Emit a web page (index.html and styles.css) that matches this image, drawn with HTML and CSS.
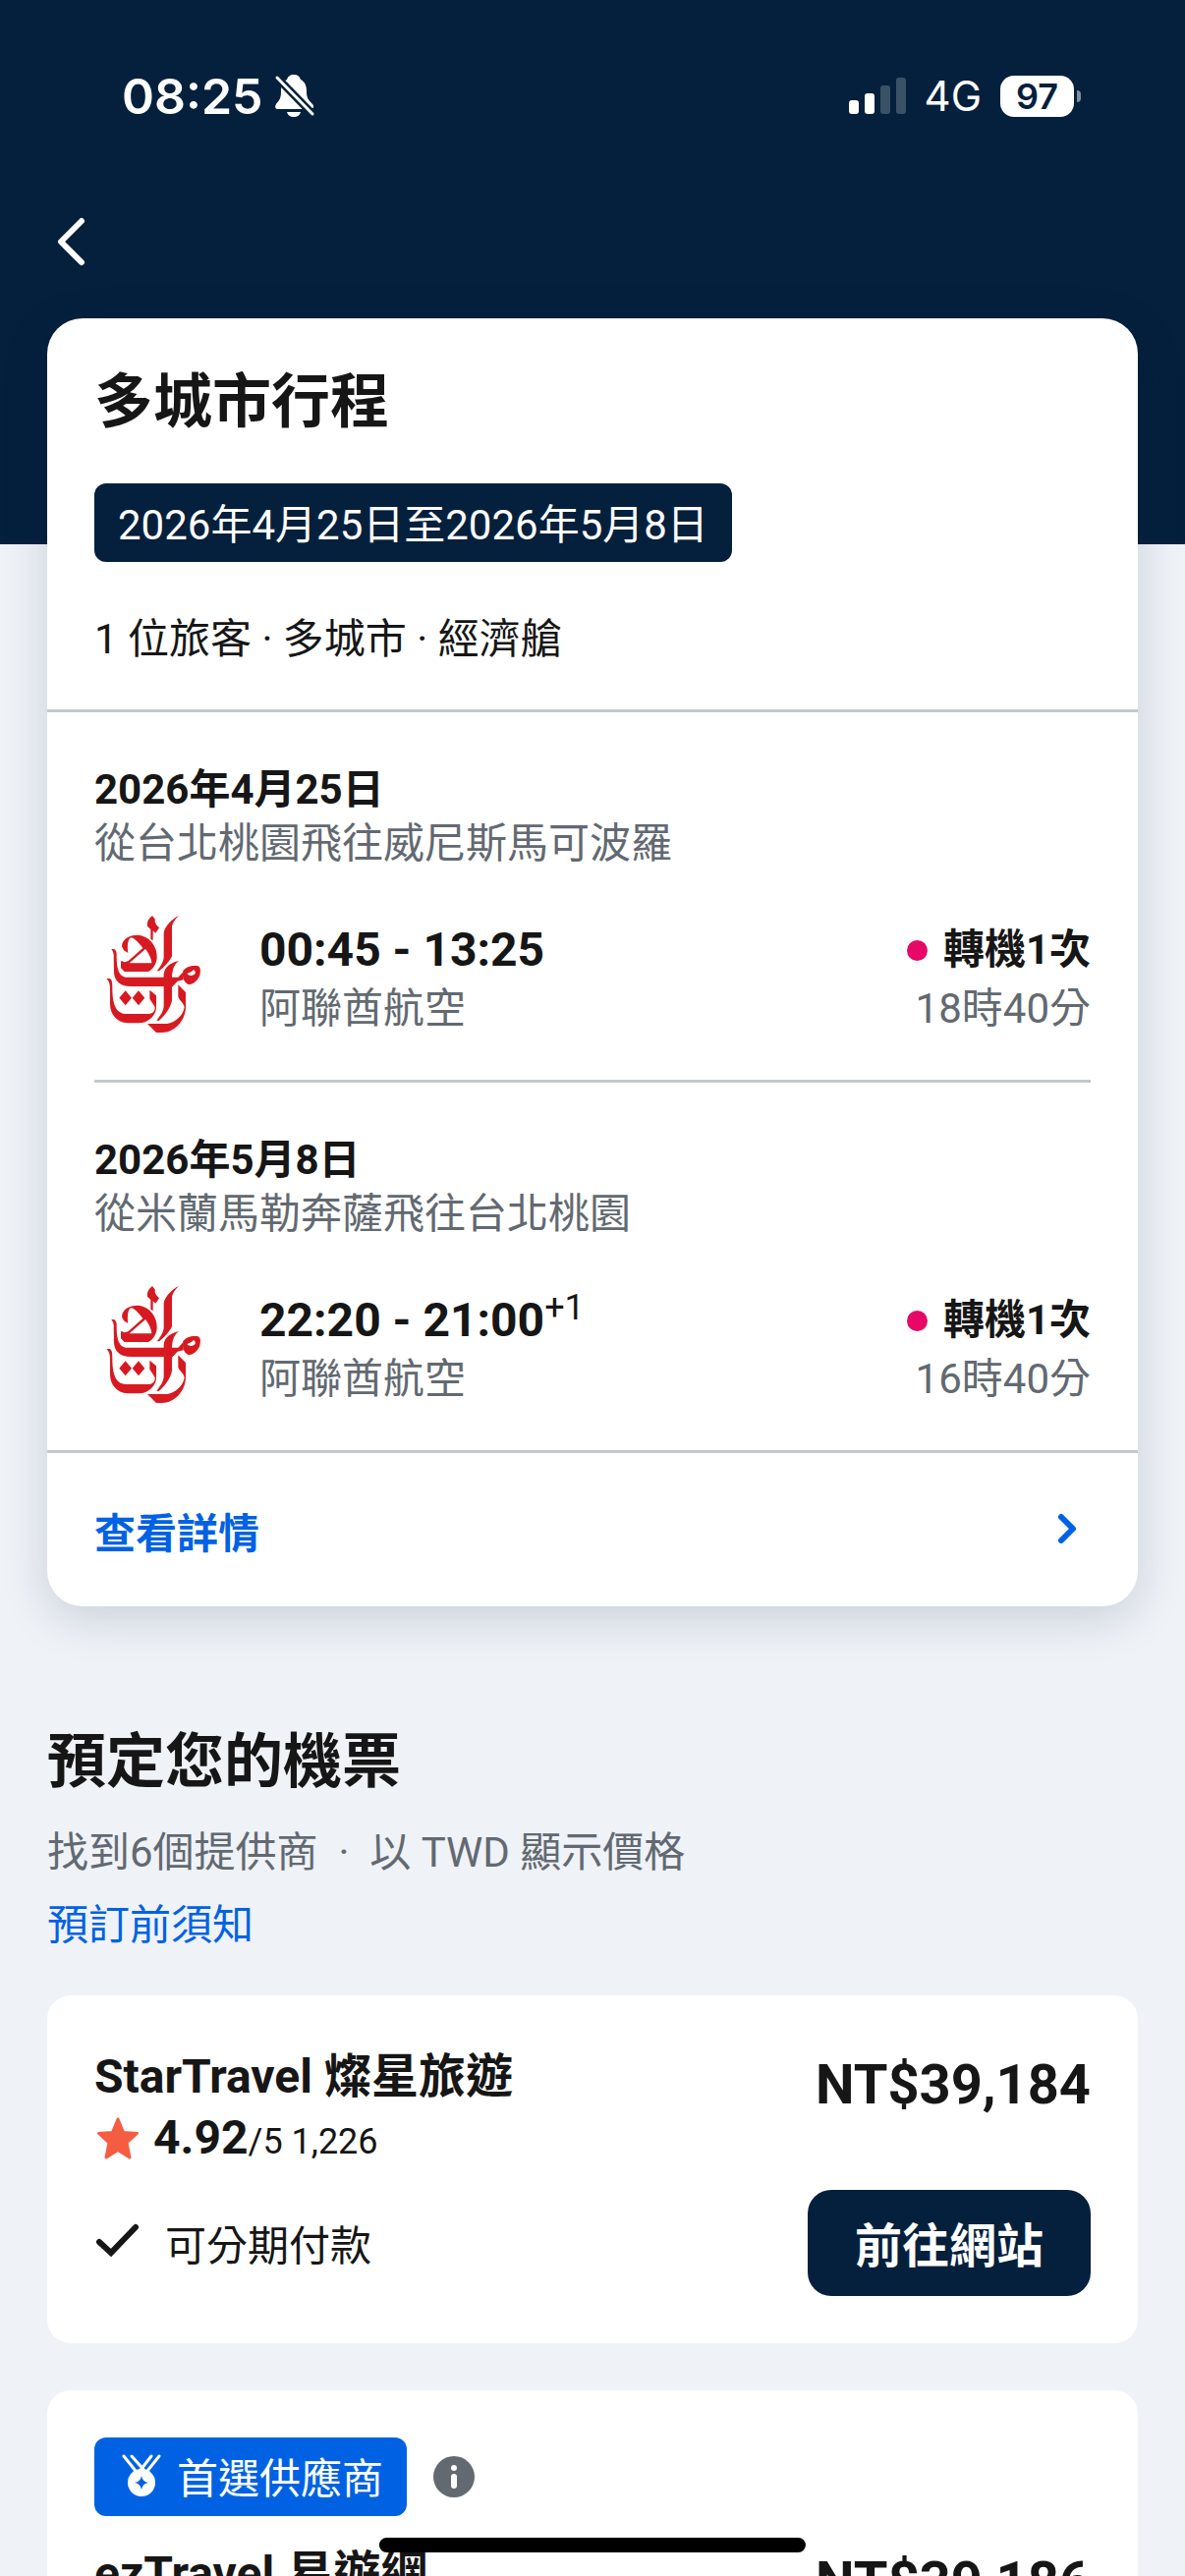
FILE: index.html
```html
<!DOCTYPE html>
<html lang="zh-Hant">
<head>
    <meta charset="UTF-8">
    <meta name="viewport" content="width=device-width, initial-scale=1.0">
    <title>多城市行程</title>
    <link rel="stylesheet" href="styles.css">
</head>
<body>
    <svg class="sprite" aria-hidden="true">
        <symbol id="emirates" viewBox="18 66 360 375">
            <g fill="#d71a21" fill-rule="evenodd">
                <path d="M195 66C184 75 178 84 180 98L190 108V137L197 142V112L205 119L216 103C208 95 200 85 204 78Z"/>
                <path d="M276 66C255 75 233 100 230 118V195C228 208 218 225 209 235L216 235C230 225 248 205 255 190V100C256 90 266 75 276 66Z"/>
                <path d="M102 160C102 138 125 125 150 125C185 127 212 160 209 195C207 215 197 230 183 237H110L99 226V205H104C108 209 115 208 122 204L166 165C155 150 140 134 130 133C120 137 118 160 121 180L108 172ZM125 211L174 168C182 178 192 195 193 211Z"/>
                <path d="M70 168H78Q87 172 86 188C86 225 92 254 118 254H230C228 232 240 212 276 204C262 215 256 230 255 254H274L290 237V262L272 266L255 284V325C252 345 235 370 215 387L208 386C220 370 230 358 230 340V282H130C95 282 80 265 78 240L77 185Q76 175 70 168Z"/>
                <path d="M289 234C298 222 318 216 335 220C343 225 343 235 340 248C334 265 318 276 305 276C292 270 286 255 289 234ZM301 243C306 250 318 251 325 244C328 240 326 234 321 231C315 239 309 240 301 243Z"/>
                <path d="M55 258H65C72 262 73 270 73 285C73 330 80 365 115 366H185C198 365 204 355 203 345L187 320V293L207 310V350C203 375 180 393 155 394H120C85 392 66 365 66 335V285C65 272 62 264 55 258Z"/>
                <path d="M113 295L132 317L113 340L94 317ZM153 295L172 317L153 340L134 317Z"/>
                <path d="M274 277L297 300V345C296 390 260 423 225 423H207L180 396H240C266 392 290 370 293 345C290 330 276 325 274 313Z"/>
            </g>
        </symbol>
    </svg>

    <div class="screen">
        <header class="header">
            <div class="status-bar">
                <div class="status-left">
                    <span class="clock">08:25</span>
                    <svg width="40" height="44" viewBox="0 0 40 44" aria-hidden="true">
                        <path fill="#fff" d="M19 0C15 0 13 2 12 5C7 7 6 12 6 17C6 25 4 26 1 30C-1 34 1 35 3 35H36C39 35 40 32 38 30C34 26 32 24 32 17C32 11 30 7 26 5C25 2 23 0 19 0ZM12 38H26C25 42 22 43 19 43S13 42 12 38Z"/>
                        <path stroke="#05203c" stroke-width="8" d="M0 1L40 42"/>
                        <path stroke="#fff" stroke-width="3" stroke-linecap="round" d="M2 3L38 40"/>
                    </svg>
                </div>
                <div class="status-right">
                    <svg width="58" height="38" viewBox="0 0 58 38" fill="#fff" aria-hidden="true">
                        <rect x="0" y="23" width="10" height="14" rx="3"/>
                        <rect x="16" y="16" width="10" height="21" rx="3"/>
                        <rect x="32" y="8" width="10" height="29" rx="3" opacity=".22"/>
                        <rect x="48" y="0" width="10" height="37" rx="3" opacity=".22"/>
                    </svg>
                    <span class="network">4G</span>
                    <span class="battery">97</span>
                </div>
            </div>
            <button class="back" aria-label="返回">
                <svg width="30" height="50" viewBox="0 0 30 50" fill="none" stroke="#fff" stroke-width="6" stroke-linecap="round" stroke-linejoin="round"><path d="M27 5L6 26L27 47"/></svg>
            </button>
        </header>

        <main class="content">
            <section class="trip">
                <div class="trip-summary">
                    <h1 class="title">多城市行程</h1>
                    <p class="badge dates">2026年4月25日至2026年5月8日</p>
                    <p class="passengers">1 位旅客 · 多城市 · 經濟艙</p>
                </div>
                <div class="legs">
                    <article class="leg">
                        <h2 class="leg-date">2026年4月25日</h2>
                        <p class="muted">從台北桃園飛往威尼斯馬可波羅</p>
                        <div class="flight">
                            <svg class="airline-logo" role="img" aria-label="阿聯酋航空"><use href="#emirates"/></svg>
                            <div class="flight-main">
                                <p class="times">00:45 - 13:25</p>
                                <p class="muted">阿聯酋航空</p>
                            </div>
                            <div class="flight-side">
                                <p class="stops">轉機1次</p>
                                <p class="muted">18時40分</p>
                            </div>
                        </div>
                    </article>
                    <article class="leg">
                        <h2 class="leg-date">2026年5月8日</h2>
                        <p class="muted">從米蘭馬勒奔薩飛往台北桃園</p>
                        <div class="flight">
                            <svg class="airline-logo" role="img" aria-label="阿聯酋航空"><use href="#emirates"/></svg>
                            <div class="flight-main">
                                <p class="times">22:20 - 21:00<sup>+1</sup></p>
                                <p class="muted">阿聯酋航空</p>
                            </div>
                            <div class="flight-side">
                                <p class="stops">轉機1次</p>
                                <p class="muted">16時40分</p>
                            </div>
                        </div>
                    </article>
                </div>
                <a class="details" href="#">
                    <span>查看詳情</span>
                    <svg width="48" height="42" viewBox="0 0 48 42" fill="none" stroke="#0062e3" stroke-width="6" stroke-linecap="round" stroke-linejoin="round" aria-hidden="true"><path d="M18 9L30 21L18 33"/></svg>
                </a>
            </section>

            <section class="booking">
                <h2 class="title">預定您的機票</h2>
                <p class="providers muted">找到6個提供商 &nbsp;·&nbsp; 以 TWD 顯示價格</p>
                <a class="notice" href="#">預訂前須知</a>

                <div class="offers">
                    <article class="offer">
                        <div class="offer-top">
                            <div>
                                <h3 class="vendor">StarTravel 燦星旅遊</h3>
                                <p class="rating">
                                    <svg width="48" height="48" viewBox="0 2 48 48" aria-hidden="true"><path fill="#f55d42" stroke="#f55d42" stroke-width="3" stroke-linejoin="round" d="M24 3L29.500 16.500L43.500 17.500L33 27L36 42L24 34.500L12 42L15 27L4.500 17.500L18.500 16.500Z"/></svg>
                                    <span><strong>4.92</strong>/5 1,226</span>
                                </p>
                            </div>
                            <p class="price">NT$39,184</p>
                        </div>
                        <div class="offer-bottom">
                            <p class="perk">
                                <svg width="48" height="42" viewBox="0 0 48 42" fill="none" stroke="#161616" stroke-width="6" stroke-linecap="round" stroke-linejoin="miter" aria-hidden="true"><path d="M5 22L17 33L42 7"/></svg>
                                可分期付款
                            </p>
                            <button class="go">前往網站</button>
                        </div>
                    </article>

                    <article class="offer">
                        <div class="offer-tags">
                            <span class="badge preferred">
                                <svg width="48" height="42" viewBox="0 0 48 42" aria-hidden="true">
                                    <g fill="none" stroke="#fff" stroke-width="3" stroke-linecap="round"><path d="M6 0L18 15M14 0L30 18M42 0L30 15M34 0L20 18"/></g>
                                    <circle cx="24" cy="27" r="14" fill="#fff"/>
                                    <path fill="#0062e3" d="M24 20Q25 26 31 27Q25 28 24 34Q23 28 17 27Q23 26 24 20Z"/>
                                </svg>
                                首選供應商
                            </span>
                            <button class="info" aria-label="首選供應商說明">
                                <svg width="42" height="42" viewBox="0 0 42 42"><circle cx="21" cy="21" r="21" fill="#626971"/><circle cx="21" cy="12" r="3" fill="#fff"/><path stroke="#fff" stroke-width="6" stroke-linecap="round" d="M21 21V30"/></svg>
                            </button>
                        </div>
                        <div class="offer-top">
                            <h3 class="vendor">ezTravel 易遊網</h3>
                            <p class="price">NT$39,186</p>
                        </div>
                    </article>
                </div>
            </section>
        </main>
    </div>
    <div class="home-indicator"></div>
</body>
</html>
```
FILE: styles.css
```css
* {
    box-sizing: border-box;
}
body, h1, h2, h3, p {
    margin: 0;
}
body {
    background: #eff2f7;
    color: #161616;
    font-family: Roboto, "Noto Sans CJK TC", sans-serif;
    font-size: 42px;
    line-height: 54px;
}
button {
    border: none;
    padding: 0;
    background: none;
    font-family: inherit;
    cursor: pointer;
}
a {
    color: #0062e3;
    text-decoration: none;
}
svg {
    display: block;
    flex: none;
    overflow: visible;
}
.sprite {
    position: absolute;
    width: 0;
    height: 0;
}
.screen {
    height: 100vh;
    overflow: hidden;
}

/* header */
.header {
    background: #05203c;
    padding-bottom: 284px;
}
.status-bar {
    display: flex;
    justify-content: space-between;
    align-items: center;
    padding: 66px 113px 0 124px;
    color: white;
    font-family: Inter, sans-serif;
}
.status-left, .status-right {
    display: flex;
    align-items: center;
}
.status-left {
    gap: 12px;
}
.status-right {
    gap: 19px;
}
.clock {
    font-size: 50px;
    line-height: 64px;
    font-weight: 600;
}
.network {
    font-size: 42px;
}
.battery {
    position: relative;
    width: 75px;
    border-radius: 14px;
    background: white;
    color: #05203c;
    font-size: 36px;
    line-height: 42px;
    font-weight: 600;
    text-align: center;
}
.battery::after {
    content: "";
    position: absolute;
    right: -7px;
    top: 15px;
    width: 4px;
    height: 12px;
    border-radius: 0 4px 4px 0;
    background: #8290a0;
}
.back {
    display: block;
    margin: 90px 0 0 56px;
}

/* trip card */
.content {
    padding: 0 48px;
}
.trip {
    margin-top: -230px;
    background: white;
    border-radius: 36px;
    box-shadow: 0 12px 48px rgba(5, 32, 60, 0.16);
}
.title {
    font-size: 60px;
    line-height: 76px;
    font-weight: 700;
}
.trip-summary {
    padding: 48px 48px 44px;
    border-bottom: 3px solid #c1c7cf;
}
.badge {
    display: inline-flex;
    gap: 12px;
    padding: 19px 24px 13px;
    border-radius: 12px;
    background: #05203c;
    color: white;
    line-height: 48px;
}
.dates {
    margin-top: 44px;
}
.passengers {
    margin-top: 52px;
}
.muted {
    color: #626971;
}
.legs {
    padding: 0 48px;
}
.leg {
    padding: 52px 0 42px;
}
.leg + .leg {
    border-top: 3px solid #c1c7cf;
}
.leg-date {
    margin-bottom: 1px;
    font-size: 42px;
    font-weight: 700;
}
.flight {
    display: flex;
    align-items: flex-end;
    margin-top: 46px;
    line-height: 60px;
}
.airline-logo {
    width: 120px;
    height: 125px;
    margin-right: 48px;
}
.flight-main {
    flex: 1;
}
.times {
    font-size: 48px;
    font-weight: 700;
}
.times sup {
    font-size: 36px;
    font-weight: 400;
    line-height: 0;
}
.flight-side {
    text-align: right;
}
.stops {
    display: flex;
    align-items: center;
    justify-content: flex-end;
    gap: 16px;
    font-weight: 700;
}
.stops::before {
    content: "";
    width: 21px;
    height: 21px;
    border-radius: 50%;
    background: #e70866;
}
.details {
    display: flex;
    justify-content: space-between;
    padding: 56px 48px 46px;
    border-top: 3px solid #c1c7cf;
    font-weight: 700;
}

/* booking */
.booking {
    padding-top: 121px;
}
.providers {
    margin-top: 27px;
}
.notice {
    display: inline-block;
    margin-top: 20px;
}
.offers {
    display: grid;
    gap: 48px;
    margin-top: 44px;
}
.offer {
    padding: 48px;
    background: white;
    border-radius: 24px;
}
.offer-top, .offer-bottom {
    display: flex;
    justify-content: space-between;
}
.offer-top {
    padding-top: 5px;
}
.offer-bottom {
    align-items: center;
    margin-top: 19px;
}
.vendor {
    font-size: 48px;
    line-height: 60px;
    font-weight: 700;
}
.price {
    font-size: 56px;
    line-height: 76px;
    font-weight: 700;
}
.rating {
    display: flex;
    align-items: center;
    gap: 12px;
    margin-top: 6px;
    font-size: 36px;
    line-height: 60px;
}
.rating strong {
    font-size: 48px;
    line-height: 48px;
}
.perk {
    display: flex;
    gap: 24px;
    padding-top: 8px;
}
.go {
    padding: 28px 48px 20px;
    border-radius: 24px;
    background: #05203c;
    color: white;
    font-size: 48px;
    line-height: 60px;
    font-weight: 700;
}
.offer-tags {
    display: flex;
    align-items: center;
    gap: 27px;
    margin-bottom: 24px;
}
.preferred {
    background: #0062e3;
}
.home-indicator {
    position: fixed;
    bottom: 24px;
    left: 50%;
    width: 36%;
    height: 15px;
    transform: translateX(-50%);
    border-radius: 8px;
    background: black;
}
```
